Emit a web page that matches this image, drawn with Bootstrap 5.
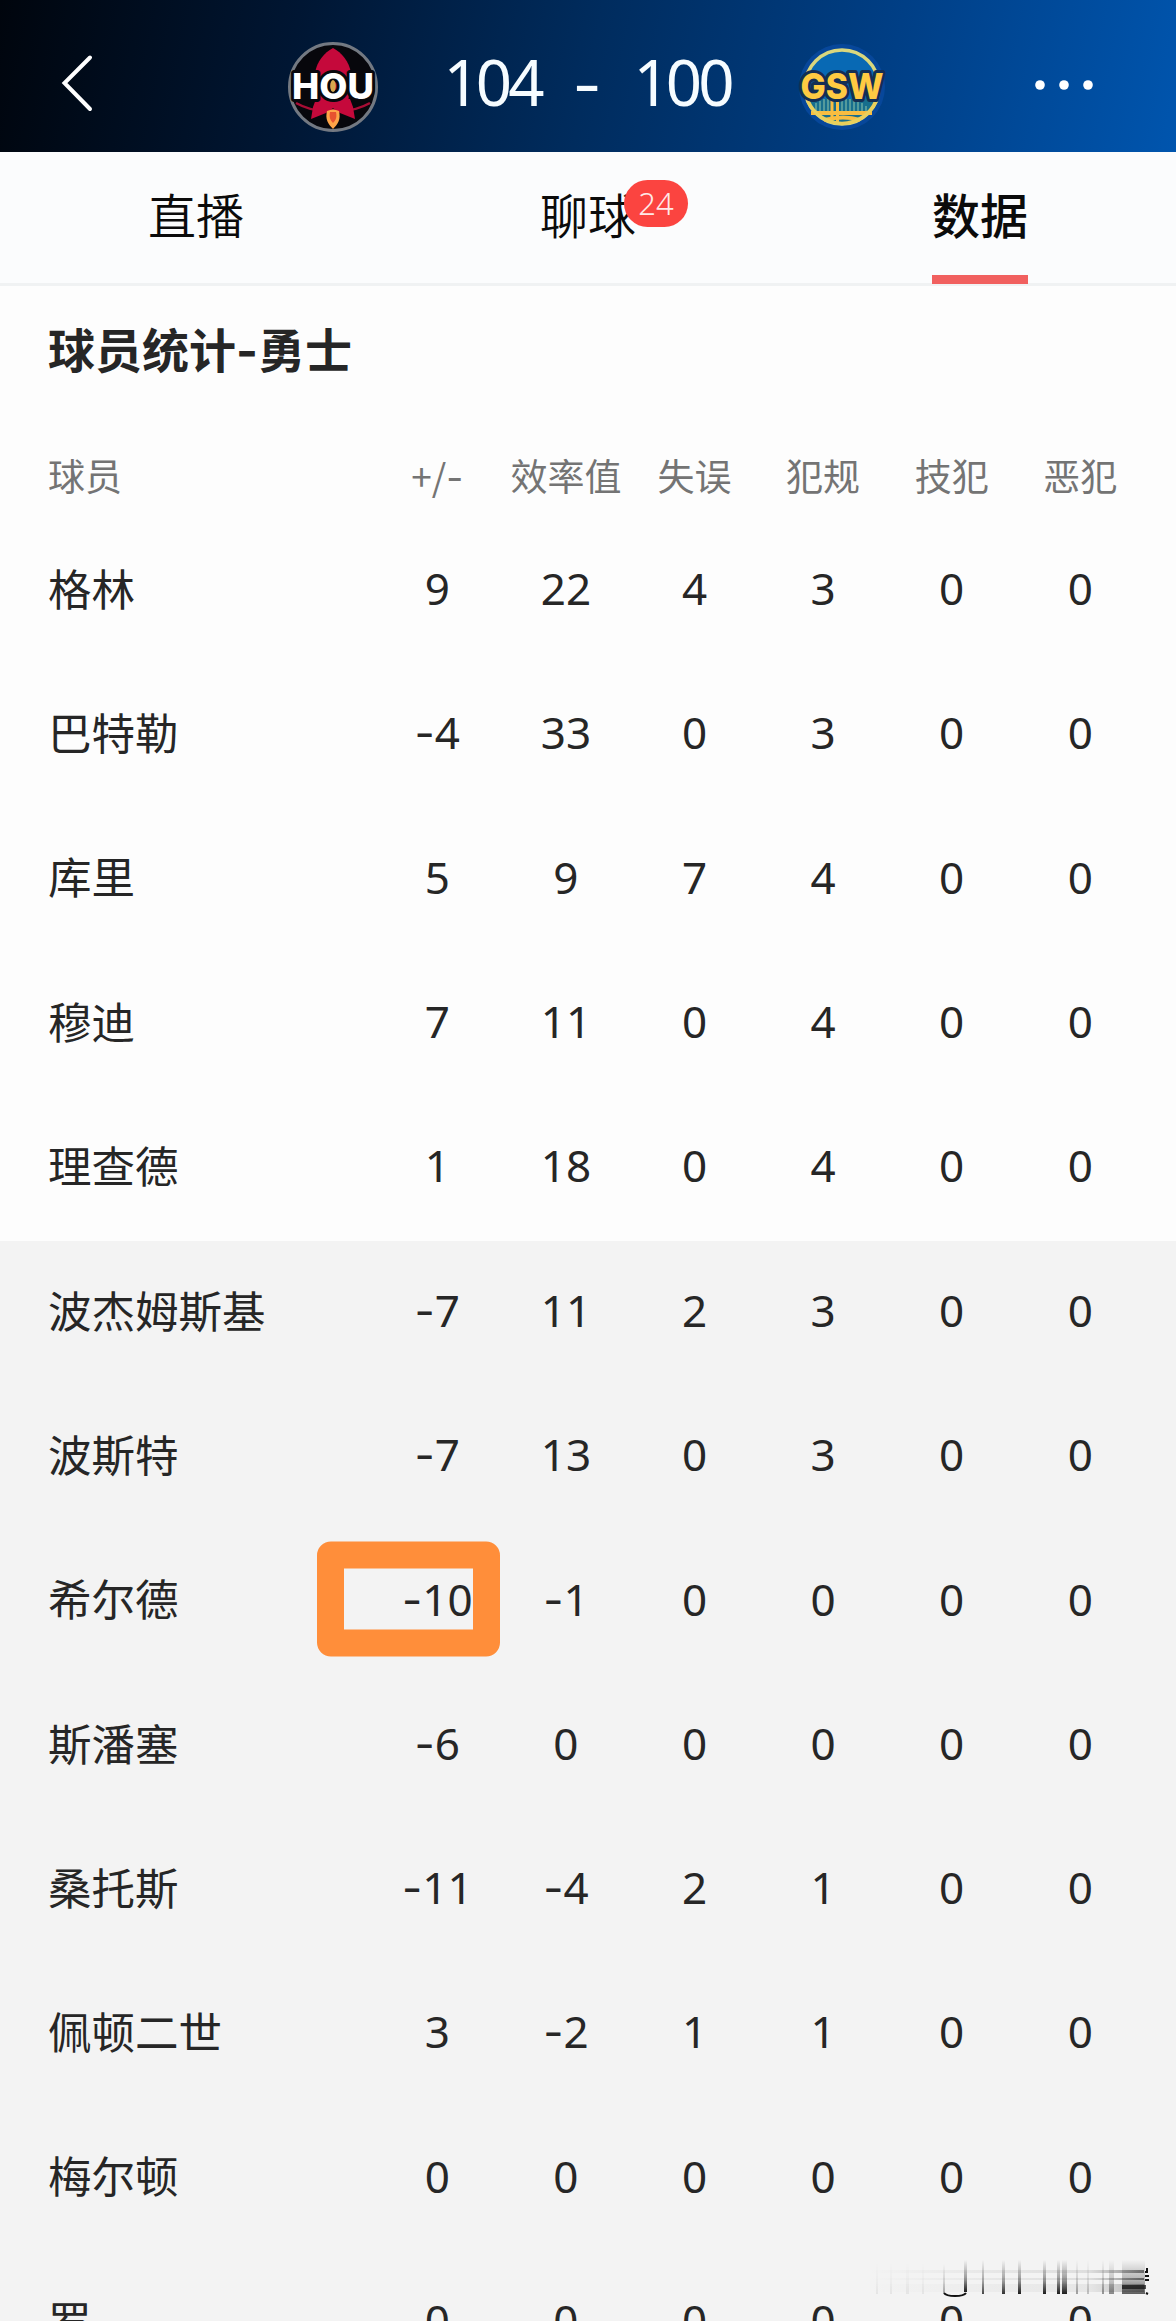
<!DOCTYPE html>
<html lang="zh-CN">
<head>
    <meta charset="UTF-8">
    <meta name="viewport" content="width=device-width, initial-scale=1.0">
    <title>球员统计</title>
    <!-- Bootstrap CSS -->
    <link href="https://cdn.jsdelivr.net/npm/bootstrap@5.3.1/dist/css/bootstrap.min.css" rel="stylesheet">
    <style>
        body {
            font-family: "Noto Sans", "Noto Sans CJK SC", sans-serif;
            color: #262626;
            background: #f3f3f3;
            height: 2321px;
            overflow: hidden;
        }
        .game-bar {
            height: 152px;
            background: linear-gradient(102deg, #00050d 0%, #001633 25%, #002c5e 50%, #003f86 75%, #0055ae 100%);
            padding: 17px 80px 0 60px;
        }
        .team-logo { width: 96px; height: 96px; }
        .score { font-size: 63.5px; line-height: 1; color: #f6fcff; }
        .score-group { margin-left: 189px; }
        .score-num { width: 106px; text-align: center; letter-spacing: -4px; padding-bottom: 5px; }
        .score-dash { width: 84px; text-align: center; }
        .score-home { margin-left: 60px; }
        .logo-away { margin-left: 59px; }
        .dash { font-family: "Inter", sans-serif; line-height: 0; }
        .tab-bar {
            height: 134px;
            background: #fbfcfd;
            border-bottom: 3px solid #f0f2f3;
            font-family: "Noto Sans CJK SC", sans-serif;
            font-size: 48px;
            color: #0b0b0b;
        }
        .tab-item { height: 128px; line-height: 123px; font-weight: 350; }
        .tab-item.current { font-weight: 500; }
        .tab-item.current::after {
            content: "";
            position: absolute;
            left: 0;
            right: 0;
            bottom: -4px;
            height: 9px;
            background: #f1605f;
        }
        .chat-count {
            position: absolute;
            left: 84px;
            top: 28px;
            width: 64px;
            height: 47px;
            border-radius: 24px;
            background: #fb4440;
            color: #ffe9e7;
            font: 300 31px/46px "Noto Sans", sans-serif;
            text-align: center;
        }
        .starters { background: #fdfdfd; height: 955px; }
        .section-title {
            font-family: "Noto Sans CJK SC", sans-serif;
            font-size: 47px;
            font-weight: 700;
            line-height: 70px;
            height: 100px;
            padding: 27px 48px 0;
            margin: 0;
        }
        .stat-row {
            display: grid;
            grid-template-columns: 325px repeat(6, 128.6px);
            height: 144.25px;
            padding: 0 0 6px 48px;
            align-items: center;
            font-size: 44px;
            line-height: 1;
            white-space: nowrap;
        }
        .stat-row > :not(:first-child) { text-align: center; justify-self: center; }
        .stat-row > :first-child { font-family: "Noto Sans CJK SC", sans-serif; font-size: 43.5px; padding-bottom: 1px; }
        .stat-row.stat-head { height: 133px; padding: 46px 0 0 48px; color: #747474; }
        .stat-head > *, .stat-head > :first-child { font-family: "Noto Sans CJK SC", sans-serif; font-size: 37px; padding-bottom: 0; }
        .pick { position: relative; }
        .pick::before {
            content: "";
            position: absolute;
            right: -27px;
            top: 50%;
            width: 183px;
            height: 115px;
            transform: translateY(-50%);
            border: 27px solid #ff8e3a;
            border-radius: 14px;
        }
        .smear { position: absolute; left: 870px; top: 2258px; }
    </style>
    <!-- Bootstrap JS -->
    <script src="https://cdn.jsdelivr.net/npm/bootstrap@5.3.1/dist/js/bootstrap.bundle.min.js"></script>
</head>
<body>
    <header class="game-bar d-flex align-items-center">
        <svg width="34" height="64" viewBox="0 0 34 64" fill="none" stroke="#fff" stroke-width="4" stroke-linecap="round">
            <path d="M30 4.500 4.500 30 30 56"/>
        </svg>
        <div class="score-group score d-flex align-items-center">
            <svg class="team-logo" viewBox="0 0 96 96">
                <circle cx="50" cy="50" r="43.500" fill="#07070c" stroke="#737982" stroke-width="3"/>
                <path d="M32 36c2-12 9-20 18-25 9 5 16 13 18 25l-3 32H35z" fill="#c5093b"/>
                <path d="M13 66q18 10 37 7 19 3 37-7" fill="none" stroke="#a80d35" stroke-width="2.500"/>
                <path d="M33 62h34l3 8 2 12-15-6-7-5-7 5-15 6 2-12z" fill="#c5093b"/>
                <path d="M44 74c-2 8 1 13 6 18 5-5 8-10 6-18q-6-3-12 0z" fill="#ffa448"/>
                <path d="M47 75c-1 5 0 8 3 11 3-3 4-6 3-11z" fill="#e75230"/>
                <text x="50" y="62" text-anchor="middle" textLength="82" lengthAdjust="spacingAndGlyphs" font-family="Inter" font-size="36" font-weight="800" fill="#fff" stroke="#08080d" stroke-width="6" stroke-linejoin="round" paint-order="stroke">HOU</text>
                <ellipse cx="50" cy="49" rx="2.800" ry="6" fill="#d7a74f"/>
            </svg>
            <span class="score-num score-home">104</span>
            <span class="score-dash dash">-</span>
            <span class="score-num">100</span>
            <svg class="team-logo logo-away" viewBox="0 0 96 96">
                <circle cx="48" cy="50" r="43" fill="#07479a"/>
                <circle cx="48" cy="50" r="37" fill="#0869b4" stroke="#d9d77d" stroke-width="3.500"/>
                <path d="M14 62h68c-4 14-17 24-34 24S18 76 14 62z" fill="#176e8d"/>
                <path d="M22 66v8M26 64v10M30 62v12M34 62v12M48 62v12M52 62v12M56 62v12M60 62v12M64 64v10M68 66v8M72 69v5" stroke="#69a9a1" stroke-width="1.500"/>
                <path d="M17 76h61M30 83q20-5 36 0" fill="none" stroke="#f8bd41" stroke-width="4"/>
                <path d="M38 62v24M43.500 62v24" stroke="#f8bd41" stroke-width="3"/>
                <path d="M14 64a37 37 0 0 0 68 0" fill="none" stroke="#e9cf5c" stroke-width="3.500"/>
                <text x="48" y="62" text-anchor="middle" textLength="83" lengthAdjust="spacingAndGlyphs" font-family="Inter" font-size="36" font-weight="800" fill="#ffca42" stroke="#142e54" stroke-width="6" stroke-linejoin="round" paint-order="stroke">GSW</text>
            </svg>
        </div>
        <svg class="ms-auto" width="62" height="12" viewBox="0 0 62 12" fill="#fff">
            <circle cx="6" cy="6" r="4.800"/><circle cx="30" cy="6" r="4.800"/><circle cx="54" cy="6" r="4.800"/>
        </svg>
    </header>

    <nav class="tab-bar row g-0 text-center">
        <div class="col"><span class="tab-item d-inline-block position-relative">直播</span></div>
        <div class="col"><span class="tab-item d-inline-block position-relative">聊球<span class="chat-count">24</span></span></div>
        <div class="col"><span class="tab-item current d-inline-block position-relative">数据</span></div>
    </nav>

    <main>
        <section class="starters">
            <h1 class="section-title">球员统计<span class="dash">-</span>勇士</h1>
            <div class="stat-row stat-head">
                <span>球员</span><span>+/<span class="dash">-</span></span><span>效率值</span><span>失误</span><span>犯规</span><span>技犯</span><span>恶犯</span>
            </div>
            <div id="starters"></div>
        </section>
        <section id="bench"></section>
    </main>

    <!-- Streaks in the bottom corner -->
    <svg class="smear" width="282" height="42" viewBox="0 0 282 42">
        <defs>
            <linearGradient id="fadeDown" x1="0" y1="0" x2="0" y2="1">
                <stop offset="0" stop-color="#222" stop-opacity="0"/>
                <stop offset=".6" stop-color="#222" stop-opacity=".45"/>
                <stop offset="1" stop-color="#111" stop-opacity=".95"/>
            </linearGradient>
            <linearGradient id="fadeRight">
                <stop offset="0" stop-color="#888" stop-opacity="0"/>
                <stop offset=".8" stop-color="#888" stop-opacity=".2"/>
                <stop offset="1" stop-color="#444" stop-opacity=".7"/>
            </linearGradient>
        </defs>
        <g fill="url(#fadeRight)">
            <rect x="0" y="12" width="274" height="3"/>
            <rect x="0" y="20" width="274" height="2"/>
            <rect x="0" y="26" width="274" height="8" opacity=".6"/>
        </g>
        <g fill="url(#fadeDown)">
            <g opacity=".06">
                <rect x="6" y="6" width="2" height="30"/><rect x="20" y="6" width="2" height="30"/>
                <rect x="36" y="6" width="3" height="30"/><rect x="52" y="6" width="2" height="30"/>
            </g>
            <rect x="73" y="6" width="2" height="29" opacity=".35"/>
            <rect x="94" y="2" width="3" height="32"/>
            <rect x="112" y="2" width="2" height="34" opacity=".8"/>
            <rect x="132" y="2" width="3" height="34" opacity=".9"/>
            <rect x="148" y="2" width="3" height="34"/>
            <rect x="173" y="2" width="3" height="34"/>
            <rect x="187" y="2" width="3" height="34"/>
            <rect x="192" y="2" width="5" height="34"/>
            <rect x="206" y="2" width="2" height="34" opacity=".4"/>
            <rect x="217" y="2" width="2" height="34" opacity=".25"/>
            <rect x="232" y="2" width="2" height="34" opacity=".45"/>
            <rect x="239" y="2" width="5" height="34" opacity=".5"/>
            <rect x="252" y="2" width="23" height="34" opacity=".7"/>
        </g>
        <path d="M74 35q2 3 11 3t11-3" fill="none" stroke="#111" stroke-width="2"/>
        <path d="M252 29h24" stroke="#111" stroke-width="4" opacity=".7"/>
        <path d="M275 14h2v-4M275 18h4M275 22h4M276 35l2 1" fill="none" stroke="#111" stroke-width="2"/>
    </svg>

    <script>
        const starters = [
            ["格林", 9, 22, 4, 3, 0, 0],
            ["巴特勒", -4, 33, 0, 3, 0, 0],
            ["库里", 5, 9, 7, 4, 0, 0],
            ["穆迪", 7, 11, 0, 4, 0, 0],
            ["理查德", 1, 18, 0, 4, 0, 0]
        ];
        const bench = [
            ["波杰姆斯基", -7, 11, 2, 3, 0, 0],
            ["波斯特", -7, 13, 0, 3, 0, 0],
            ["希尔德", -10, -1, 0, 0, 0, 0],
            ["斯潘塞", -6, 0, 0, 0, 0, 0],
            ["桑托斯", -11, -4, 2, 1, 0, 0],
            ["佩顿二世", 3, -2, 1, 1, 0, 0],
            ["梅尔顿", 0, 0, 0, 0, 0, 0],
            ["罗", 0, 0, 0, 0, 0, 0]
        ];

        function renderRows(id, players) {
            document.getElementById(id).innerHTML = players.map(player => {
                const cells = player.map(value => {
                    const text = String(value).replace("-", '<span class="dash">-</span>');
                    return `<span class="${value === -10 ? "pick" : ""}">${text}</span>`;
                });
                return `<div class="stat-row">${cells.join("")}</div>`;
            }).join("");
        }

        renderRows("starters", starters);
        renderRows("bench", bench);
    </script>
</body>
</html>
